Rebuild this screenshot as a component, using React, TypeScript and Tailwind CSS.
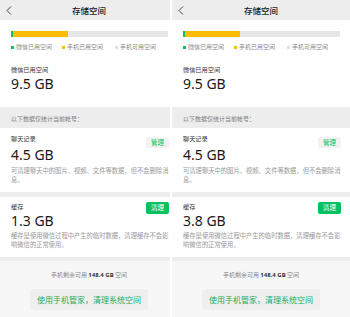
type PanelProps = {
  cacheSize: string;
};

function Panel({ cacheSize }: PanelProps) {
  return (
    <div className="w-[178px] h-[317px] flex flex-col bg-[#f7f7f7] font-['Noto_Sans_CJK_SC',sans-serif] text-[#191919]">
      {/* header */}
      <div className="relative h-[20px] shrink-0 bg-[#ededed] flex items-center justify-center">
        <svg
          className="absolute left-[6px] top-[6px]"
          width="6"
          height="9"
          viewBox="0 0 6 9"
          fill="none"
        >
          <polyline points="5,0.5 1,4.5 5,8.5" stroke="#333" strokeWidth="0.9" />
        </svg>
        <span className="text-[8.5px] font-medium leading-none">存储空间</span>
      </div>

      {/* summary */}
      <div className="h-[87px] shrink-0 bg-white px-[11px] pt-[11px]">
        <div className="flex h-[6px] w-[157px]">
          <div className="w-[2px] bg-[#07c160]" />
          <div className="w-[55px] bg-[#fabd00]" />
          <div className="flex-1 bg-[#e6e6e6]" />
        </div>
        <div className="mt-[6px] flex h-[8px] items-center text-[6px] leading-none text-[#8a8a8a]">
          <div className="flex w-[51px] items-center gap-[2px]">
            <span className="h-[3px] w-[3px] bg-[#07c160]" />
            <span>微信已用空间</span>
          </div>
          <div className="flex w-[53px] items-center gap-[2px]">
            <span className="h-[3px] w-[3px] bg-[#fabd00]" />
            <span>手机已用空间</span>
          </div>
          <div className="flex items-center gap-[2px]">
            <span className="h-[3px] w-[3px] bg-[#e0e0e0]" />
            <span>手机可用空间</span>
          </div>
        </div>
        <div className="mt-[15px] h-[8px] text-[6.2px] leading-[8px] text-[#333]">
          微信已用空间
        </div>
        <div className="mt-[1px] h-[18px] text-[14px] leading-[18px] font-['Noto_Sans',sans-serif]">
          9.5 GB
        </div>
      </div>

      {/* notice */}
      <div className="h-[21px] shrink-0 bg-[#ededed] px-[11px] pt-[2px] flex items-center text-[6px] text-[#7f7f7f]">
        以下数据仅统计当前帐号：
      </div>

      {/* chat records */}
      <div className="relative h-[64px] shrink-0 bg-white px-[11px] pt-[7px]">
        <div className="h-[8px] text-[6.2px] leading-[8px] text-[#333]">聊天记录</div>
        <div className="absolute right-[9px] top-[9px] flex h-[11px] w-[23px] items-center justify-center rounded-[2px] bg-[#f2f2f2] text-[6.5px] text-[#07c160]">
          管理
        </div>
        <div className="mt-[4px] h-[16px] text-[14px] leading-[16px] font-['Noto_Sans',sans-serif]">
          4.5 GB
        </div>
        <div className="mt-[3px] whitespace-nowrap text-[6.3px] leading-[9px] text-[#999]">
          可清理聊天中的图片、视频、文件等数据，但不会删除消
          <br />
          息。
        </div>
      </div>

      <div className="h-[5px] shrink-0 bg-[#ededed]" />

      {/* cache */}
      <div className="relative h-[60px] shrink-0 bg-white px-[11px] pt-[6px]">
        <div className="h-[8px] text-[6.2px] leading-[8px] text-[#333]">缓存</div>
        <div className="absolute right-[9px] top-[5px] flex h-[12px] w-[23px] items-center justify-center rounded-[2px] bg-[#07c160] text-[6.5px] text-white">
          清理
        </div>
        <div className="mt-[2px] h-[16px] text-[14px] leading-[16px] font-['Noto_Sans',sans-serif]">
          {cacheSize}
        </div>
        <div className="mt-[3px] whitespace-nowrap text-[6.3px] leading-[8.5px] text-[#999]">
          缓存是使用微信过程中产生的临时数据，清理缓存不会影
          <br />
          响微信的正常使用。
        </div>
      </div>

      <div className="h-[4px] shrink-0 bg-[#ededed]" />

      {/* footer */}
      <div className="flex flex-1 flex-col items-center pt-[10px]">
        <div className="h-[8px] text-[6px] leading-[8px] text-[#8a8a8a]">
          手机剩余可用 <span className="font-bold text-[#333] font-['Noto_Sans',sans-serif]">148.4 GB</span> 空间
        </div>
        <div className="mt-[10px] flex h-[21px] w-[118px] items-center justify-center rounded-[3px] bg-[#efefef] text-[8px] text-[#1aad5f]">
          使用手机管家，清理系统空间
        </div>
      </div>
    </div>
  );
}

export default function App() {
  return (
    <div className="flex h-[317px] w-[350px] overflow-hidden bg-white">
      <div className="w-[170px] shrink-0 overflow-hidden">
        <Panel cacheSize="1.3 GB" />
      </div>
      <div className="w-[2px] shrink-0" />
      <div className="w-[178px] shrink-0">
        <Panel cacheSize="3.8 GB" />
      </div>
    </div>
  );
}
